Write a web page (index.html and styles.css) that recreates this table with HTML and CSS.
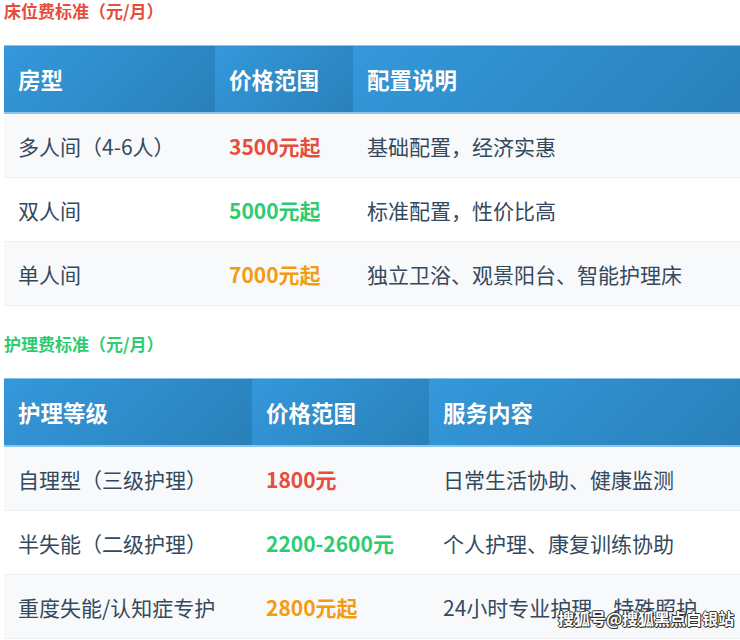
FILE: index.html
```html
<!DOCTYPE html>
<html lang="zh-CN">
<head>
<meta charset="utf-8">
<link rel="stylesheet" href="styles.css">
</head>
<body>
<div class="page">
  <h3 class="title title-red">床位费标准（元/月）</h3>
  <table class="fee">
    <colgroup><col class="c1a"><col class="c2a"><col></colgroup>
    <thead>
      <tr><th>房型</th><th>价格范围</th><th>配置说明</th></tr>
    </thead>
    <tbody>
      <tr><td>多人间（4-6人）</td><td class="price red">3500元起</td><td>基础配置，经济实惠</td></tr>
      <tr><td>双人间</td><td class="price green">5000元起</td><td>标准配置，性价比高</td></tr>
      <tr><td>单人间</td><td class="price orange">7000元起</td><td>独立卫浴、观景阳台、智能护理床</td></tr>
    </tbody>
  </table>

  <h3 class="title title-green">护理费标准（元/月）</h3>
  <table class="fee">
    <colgroup><col class="c1b"><col class="c2b"><col></colgroup>
    <thead>
      <tr><th>护理等级</th><th>价格范围</th><th>服务内容</th></tr>
    </thead>
    <tbody>
      <tr><td>自理型（三级护理）</td><td class="price red">1800元</td><td>日常生活协助、健康监测</td></tr>
      <tr><td>半失能（二级护理）</td><td class="price green">2200-2600元</td><td>个人护理、康复训练协助</td></tr>
      <tr><td>重度失能/认知症专护</td><td class="price orange">2800元起</td><td>24小时专业护理、特殊照护</td></tr>
    </tbody>
  </table>
  <div class="watermark">搜狐号@搜狐黑点白银站</div>
</div>
</body>
</html>
```

FILE: styles.css
```css
html, body {
  margin: 0;
  padding: 0;
  background: #ffffff;
}
body {
  font-family: "Noto Sans CJK SC", "Noto Sans", sans-serif;
  color: #34495e;
}
.page {
  position: relative;
  width: 740px;
  height: 640px;
  overflow: hidden;
  padding: 1px 0 0 4px;
  box-sizing: border-box;
}
.title {
  margin: 0 0 24px 0;
  font-size: 17px;
  line-height: 20px;
  font-weight: 700;
}
.title-red { color: #e74c3c; }
.title-green { color: #2ecc71; }
.fee {
  width: 736px;
  border-collapse: collapse;
  table-layout: fixed;
  margin-bottom: 28px;
}
.c1a { width: 211px; }
.c2a { width: 138px; }
.c1b { width: 248px; }
.c2b { width: 177px; }
.fee th {
  height: 66px;
  padding: 0 14px;
  text-align: left;
  font-size: 22.5px;
  font-weight: 700;
  color: #ffffff;
  background: linear-gradient(135deg, #3498db 0%, #2980b9 100%);
  border-top: 1px solid #8cc4ea;
  border-bottom: 2px solid #8cc4ea;
  text-shadow: 0 0 1px rgba(0,0,0,0.15);
}
.fee td {
  height: 63px;
  padding: 0 14px;
  font-size: 21px;
  border-bottom: 1px solid #ebedef;
  white-space: nowrap;
}
.fee tbody tr:nth-child(odd) td { background: #f8f9fa; }
.fee tbody tr:nth-child(even) td { background: #ffffff; }
.price { font-weight: 700; }
.red { color: #e74c3c; }
.green { color: #2ecc71; }
.orange { color: #f39c12; }
.watermark {
  position: absolute;
  right: 6px;
  bottom: 10px;
  font-size: 16px;
  font-weight: 700;
  color: #ffffff;
  text-shadow: -1px 0 #333, 1px 0 #333, 0 -1px #333, 0 1px #333, 1px 1px #333;
}
```
